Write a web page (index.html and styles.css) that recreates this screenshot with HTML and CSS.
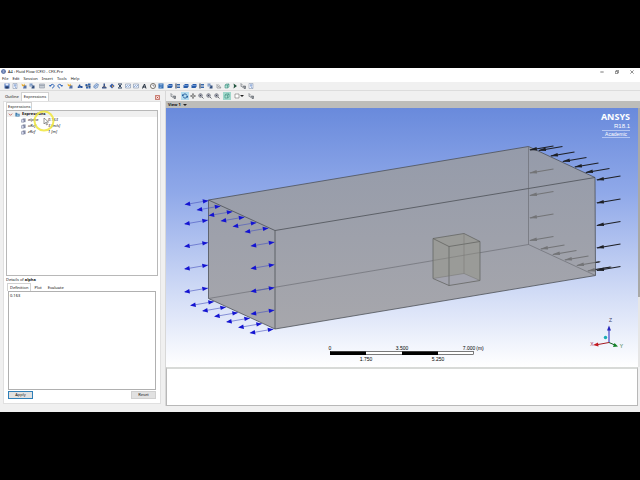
FILE: index.html
```
<!DOCTYPE html>
<html lang="en">
<head>
<meta charset="utf-8">
<title>A4 : Fluid Flow (CFX) - CFX-Pre</title>
<link rel="stylesheet" href="styles.css">
</head>
<body>
<svg class="defs" aria-hidden="true">
  <symbol id="save" viewBox="0 0 12 12"><path d="M1 1h10v10H1z" fill="#4a72b8"/><path d="M3 1h6v4H3z" fill="#e8eefc"/><path d="M3 7h6v4H3z" fill="#26395f"/></symbol>
  <symbol id="doc" viewBox="0 0 12 12"><path d="M2 1h8v10H2z" fill="#f5f8ff" stroke="#7d8ba3"/><path d="M4 4h5M6 3v5l3 2" stroke="#2d63b0" fill="none"/></symbol>
  <symbol id="spark" viewBox="0 0 12 12"><path d="M1 1l4 3 2-3 1 4 3 1-5 1-4-1z" fill="#eeb030"/><path d="M6 5h5v6H4z" fill="#5672a8"/></symbol>
  <symbol id="copy" viewBox="0 0 12 12"><path d="M1 1h6v6H1z" fill="#7897c4"/><path d="M6 5h5v6H5z" fill="#34517f"/><path d="M2 3l5 5" stroke="#eee"/></symbol>
  <symbol id="grid" viewBox="0 0 12 12"><path d="M1 2h10v8H1z" fill="#dde3ea" stroke="#7d8794"/><path d="M1 5h10M4 2v8M8 2v8" stroke="#7d8794"/></symbol>
  <symbol id="undo" viewBox="0 0 12 12"><path d="M3 5c2-4 8-2 7 1 0 3-3 4-4 4" fill="none" stroke="#2b62b8" stroke-width="2"/><path d="M0 4l6 0-4 4z" fill="#2b62b8"/></symbol>
  <symbol id="mesh" viewBox="0 0 12 12"><path d="M1 8l5-6 1 4h4v4H2z" fill="#244f99"/><path d="M3 7l5 3" stroke="#b0c8ee" stroke-width="1"/></symbol>
  <symbol id="domain" viewBox="0 0 12 12"><path d="M1 2h4v4H1zM6 1h5v4H6zM2 7h4v4H2zM7 6h4v5H7z" fill="#3163ac"/><path d="M1 6h10" stroke="#222"/></symbol>
  <symbol id="tilt" viewBox="0 0 12 12"><path d="M3 4l4-3 4 2-2 6-5 2-3-3z" fill="#bdd0ec" stroke="#456da6"/><path d="M2 9l7-6" stroke="#345f9f"/></symbol>
  <symbol id="down" viewBox="0 0 12 12"><path d="M5 1h3v6H5zM2 8h9v3H2z" fill="#38558b"/><path d="M3 6h7L6 10z" fill="#667"/></symbol>
  <symbol id="diamond" viewBox="0 0 12 12"><path d="M6 1l5 5-5 5-5-5z" fill="#365caa"/><path d="M6 4l3 3-3 2z" fill="#e09b35"/></symbol>
  <symbol id="cross" viewBox="0 0 12 12"><path d="M2 2h8M2 10h8M3 3l6 6M9 3l-6 6" stroke="#354865" stroke-width="2"/></symbol>
  <symbol id="chart" viewBox="0 0 12 12"><path d="M1 2h10v8H1z" fill="#edf2fb" stroke="#697c9a"/><path d="M2 8l3-3 2 2 3-3" stroke="#3869b2" fill="none"/></symbol>
  <symbol id="lambda" viewBox="0 0 12 12"><path d="M3 11l4-9 3 9M3 8h6" stroke="#253040" fill="none" stroke-width="2"/></symbol>
  <symbol id="clock" viewBox="0 0 12 12"><circle cx="6" cy="6" r="5" fill="#fff" stroke="#746f67" stroke-width="2"/><path d="M6 3v3h3" stroke="#223" fill="none"/></symbol>
  <symbol id="panel" viewBox="0 0 12 12"><path d="M1 1h10v10H1z" fill="#2b69b1"/><path d="M3 3h6M3 6h6M3 9h4" stroke="#d4e7ff"/></symbol>
  <symbol id="box" viewBox="0 0 12 12"><path d="M1 5l3-3h7v5l-2 3H1z" fill="#295da9"/><path d="M2 5h7l2-2" stroke="#a9caff" fill="none"/></symbol>
  <symbol id="flag" viewBox="0 0 12 12"><path d="M2 1v10" stroke="#222d42" stroke-width="2"/><path d="M4 2h6v3H4zM4 7h6v3H4z" fill="#3868a9"/></symbol>
  <symbol id="angle" viewBox="0 0 12 12"><path d="M2 2v8h8L5 3M3 5l4 4" stroke="#5e6269" fill="none"/></symbol>
  <symbol id="play" viewBox="0 0 12 12"><path d="M3 1l7 5-7 5 1-5z" fill="#245440"/></symbol>
  <symbol id="pointer" viewBox="0 0 12 12"><path d="M2 1v6l2-1 2 4M2 1l4 4" stroke="#4b5058" fill="none"/><path d="M7 6h4v5H8z" fill="#9ba0a7" stroke="#41464d"/></symbol>
  <symbol id="rotate" viewBox="0 0 12 12"><path d="M2 5c0-4 7-4 8 0M10 7c0 4-7 4-8 0" fill="none" stroke="#225a9c" stroke-width="2"/><path d="M0 2v4h4zM12 10V6H8z" fill="#225a9c"/></symbol>
  <symbol id="pan" viewBox="0 0 12 12"><path d="M6 2v8M2 6h8" stroke="#444"/><path d="M6 0l2 3H4zM6 12l2-3H4zM0 6l3-2v4zM12 6L9 4v4z" fill="#444"/></symbol>
  <symbol id="zoom" viewBox="0 0 12 12"><circle cx="5" cy="5" r="3.5" fill="#eef" stroke="#4a4f57" stroke-width="1.4"/><path d="M3 5h4M5 3v4M8 8l3 3" stroke="#353a42" stroke-width="1.4"/></symbol>
  <symbol id="cube" viewBox="0 0 12 12"><path d="M2 4l3-2h5v6l-3 2H2zM2 4h5v6M7 4l3-2" fill="#b0ded2" stroke="#298273"/></symbol>
  <symbol id="square" viewBox="0 0 12 12"><path d="M2 2h8v8H2z" fill="#fff" stroke="#555"/></symbol>
</svg>

<div class="app">
  <header class="titlebar">
    <svg class="logo" viewBox="0 0 12 12" aria-hidden="true"><circle cx="6" cy="6" r="5.5" fill="#415e99"/><path d="M3 3h6v6H3zM3 6h6" fill="#dbe7ff" stroke="#304c89"/></svg>
    <h1>A4 : Fluid Flow (CFX) - CFX-Pre</h1>
    <div class="window-buttons">
      <button aria-label="Minimize"><svg viewBox="0 0 12 12"><path d="M1 6h10" stroke="#333" stroke-width="2"/></svg></button>
      <button aria-label="Restore"><svg viewBox="0 0 12 12"><path d="M1 4h7v7H1zM4 4V1h7v7H8" fill="none" stroke="#333" stroke-width="1.6"/></svg></button>
      <button aria-label="Close"><svg viewBox="0 0 12 12"><path d="M1 1l10 10M11 1L1 11" stroke="#333" stroke-width="1.6"/></svg></button>
    </div>
  </header>
  <nav class="menubar">
    <button>File</button><button>Edit</button><button>Session</button><button>Insert</button><button>Tools</button><button>Help</button>
  </nav>
  <div class="toolbar main-tools" role="toolbar" aria-label="Main">
    <div class="group"><button aria-label="Save"><svg><use href="#save"/></svg></button><button aria-label="Report"><svg><use href="#doc"/></svg></button></div>
    <div class="group"><button aria-label="Import"><svg><use href="#spark"/></svg></button><button aria-label="Copy"><svg><use href="#copy"/></svg></button></div>
    <div class="group spaced"><button aria-label="Table"><svg><use href="#grid"/></svg></button></div>
    <div class="group"><button aria-label="Undo"><svg><use href="#undo"/></svg></button><button aria-label="Redo"><svg class="flip"><use href="#undo"/></svg></button></div>
    <div class="group spaced"><button aria-label="New"><svg><use href="#spark"/></svg></button></div>
    <div class="group"><button aria-label="Mesh"><svg><use href="#mesh"/></svg></button><button aria-label="Domain"><svg><use href="#domain"/></svg></button><button aria-label="Boundary"><svg><use href="#tilt"/></svg></button><button aria-label="Source"><svg><use href="#down"/></svg></button><button aria-label="Point"><svg><use href="#diamond"/></svg></button><button aria-label="Interface"><svg><use href="#cross"/></svg></button><button aria-label="Monitor"><svg><use href="#chart"/></svg></button><button aria-label="Function"><svg><use href="#chart"/></svg></button><button aria-label="Expression"><svg><use href="#lambda"/></svg></button></div>
    <div class="group"><button aria-label="Time"><svg><use href="#clock"/></svg></button><button aria-label="Solver"><svg><use href="#panel"/></svg></button></div>
    <div class="group"><button aria-label="Volume"><svg><use href="#box"/></svg></button><button aria-label="Region"><svg><use href="#flag"/></svg></button><button aria-label="Subdomain"><svg><use href="#box"/></svg></button><button aria-label="Body"><svg><use href="#box"/></svg></button><button aria-label="Output"><svg><use href="#flag"/></svg></button><button aria-label="Coordinates"><svg><use href="#copy"/></svg></button></div>
    <div class="group"><button aria-label="Angle"><svg><use href="#angle"/></svg></button><button aria-label="Transform"><svg><use href="#cube"/></svg></button><button aria-label="Run"><svg><use href="#play"/></svg></button><button aria-label="Write"><svg><use href="#pointer"/></svg></button><button aria-label="Pages"><svg><use href="#doc"/></svg></button></div>
  </div>

  <main class="workspace">
    <section class="side">
      <div class="tabs outer-tabs" role="tablist">
        <button role="tab">Outline</button><button role="tab" class="active" aria-selected="true">Expressions</button>
        <button class="close" aria-label="Close panel"><svg viewBox="0 0 12 12"><path d="M1 1h10v10H1z" fill="#f7dfda" stroke="#b95e52" stroke-width="2"/><path d="M4 4l4 4M8 4l-4 4" stroke="#b84437" stroke-width="2"/></svg></button>
      </div>
      <div class="side-body">
        <div class="tabs inner-tabs" role="tablist"><button role="tab" class="active" aria-selected="true">Expressions</button></div>
        <div class="tree">
          <div class="tree-head"><svg viewBox="0 0 12 12"><path d="M2 4l4 4 4-4" fill="none" stroke="#c0564a" stroke-width="2"/></svg><svg viewBox="0 0 12 12"><path d="M1 2h4l1 2h5v7H1z" fill="#3a78ab"/><path d="M4 6h5v3H4z" fill="#a4d2ea"/></svg><b>Expressions</b></div>
          <ul>
            <li><svg viewBox="0 0 12 12"><path d="M4 1h7v9H4z" fill="#8b91aa"/><path d="M1 4h6v6H1z" fill="#dfe3f5" stroke="#4e5577"/></svg><span>alpha</span><span>0.163</span></li>
            <li><svg viewBox="0 0 12 12"><path d="M4 1h7v9H4z" fill="#8b91aa"/><path d="M1 4h6v6H1z" fill="#dfe3f5" stroke="#4e5577"/></svg><span>uRef</span><span>3 [m/s]</span></li>
            <li><svg viewBox="0 0 12 12"><path d="M4 1h7v9H4z" fill="#8b91aa"/><path d="M1 4h6v6H1z" fill="#dfe3f5" stroke="#4e5577"/></svg><span>zRef</span><span>1 [m]</span></li>
          </ul>
          <div class="cursor"><svg viewBox="0 0 24 24" aria-hidden="true"><circle cx="12" cy="12" r="9.5" fill="none" stroke="#f0e63c" stroke-width="2" opacity=".85"/><path d="M12 9v6l1.500-1.500 1 2.500 1-.5-1-2.500h2z" fill="#fff" stroke="#555" stroke-width=".6"/></svg></div>
        </div>
        <h2>Details of <b>alpha</b></h2>
        <div class="tabs detail-tabs" role="tablist"><button role="tab" class="active" aria-selected="true">Definition</button><button role="tab">Plot</button><button role="tab">Evaluate</button></div>
        <textarea aria-label="Definition" spellcheck="false">0.163</textarea>
        <div class="actions"><button class="apply">Apply</button><button>Reset</button></div>
      </div>
    </section>

    <section class="stage">
      <div class="toolbar view-tools" role="toolbar" aria-label="View">
        <button aria-label="Select"><svg><use href="#pointer"/></svg></button>
        <div class="group"><button aria-label="Rotate" class="on-blue"><svg><use href="#rotate"/></svg></button><button aria-label="Pan"><svg><use href="#pan"/></svg></button><button aria-label="Zoom"><svg><use href="#zoom"/></svg></button><button aria-label="Zoom box"><svg><use href="#zoom"/></svg></button><button aria-label="Fit view"><svg><use href="#zoom"/></svg></button></div>
        <button aria-label="Projection" class="on-green"><svg><use href="#cube"/></svg></button>
        <button aria-label="Layout" class="drop"><svg><use href="#square"/></svg><i class="caret"></i></button>
        <button aria-label="Label"><svg><use href="#pointer"/></svg></button>
      </div>
      <button class="view-title">View 1 <i class="caret"></i></button>
      <div class="view-row">
        <div class="viewport">
          <svg class="scene" viewBox="166 108 472 258" role="img" aria-label="Flow domain with inlet and outlet arrows">
            <defs>
              <linearGradient id="solid" gradientUnits="userSpaceOnUse" x1="0" y1="146" x2="0" y2="329"><stop offset="0" stop-color="#959baa"/><stop offset="1" stop-color="#a7a7ac"/></linearGradient>
              <g id="flow"><path d="M-23 4L0 0" stroke="#4752bd" stroke-width=".6"/><path d="M0 .3l-6-1.600.8 4.400zM-24 4l6 1.500-.8-4.400z" fill="#1414d2"/></g>
              <g id="in"><path d="M1 0L24.500-4" stroke="currentColor" stroke-width="1.200"/><path d="M0 0l7.500-2.900.6 3.400z" fill="currentColor"/></g>
            </defs>
            <path d="M208.500 199.500L528.500 146 595 177 595.500 275 275 328.500 208.500 298z" fill="url(#solid)"/>
            <g fill="none" stroke="#4d5057" stroke-width=".8">
              <path d="M208.500 199.500L528.500 146 595 177 595.500 275 275 328.500 208.500 298zM208.500 199.500L275 230V328.500M275 230L595 177"/>
              <path d="M208.500 298L528.500 244V146M528.500 244l67 31" stroke="#65676d" stroke-width=".6"/>
            </g>
            <path d="M433 238l31-5 16 8v39l-31 5-16-7z" fill="#9a9b98"/><path d="M433 278l31-5 16 7-31 5z" fill="#a2a3ad"/>
            <path d="M433 238l31-5 16 8v39l-31 5-16-7zM433 238l16 8 31-5M449 246v39" fill="none" stroke="#5d5e5c" stroke-width=".7"/>
            <path d="M464 233v40M433 278l31-5 16 7M433 260l47-8" fill="none" stroke="#747573" stroke-width=".5"/>
            <g>
              <use href="#flow" x="208.500" y="200"/><use href="#flow" x="220.500" y="205.500"/><use href="#flow" x="232.500" y="211"/><use href="#flow" x="244.500" y="216.500"/><use href="#flow" x="256.500" y="222"/><use href="#flow" x="268.500" y="227.500"/>
              <use href="#flow" x="208" y="219.500"/><use href="#flow" x="208" y="242"/><use href="#flow" x="208" y="264.500"/><use href="#flow" x="208" y="287.500"/>
              <use href="#flow" x="274.500" y="241.500"/><use href="#flow" x="274.500" y="264"/><use href="#flow" x="274.500" y="287"/><use href="#flow" x="274.500" y="309.500"/>
              <use href="#flow" x="214" y="301"/><use href="#flow" x="226" y="306.500"/><use href="#flow" x="238" y="312"/><use href="#flow" x="250" y="317.500"/><use href="#flow" x="262" y="323"/><use href="#flow" x="273.500" y="328.500"/>
            </g>
            <g color="#737477">
              <use href="#in" x="529" y="172.500"/><use href="#in" x="529" y="195"/><use href="#in" x="529" y="217.500"/><use href="#in" x="529" y="240"/>
              <use href="#in" x="540" y="248.500"/><use href="#in" x="552" y="254"/><use href="#in" x="564" y="259.500"/><use href="#in" x="576" y="265"/><use href="#in" x="587" y="270.500"/>
            </g>
            <g color="#1e2026">
              <use href="#in" x="529" y="149.500"/><use href="#in" x="538" y="150"/><use href="#in" x="550" y="155.500"/><use href="#in" x="562" y="161"/><use href="#in" x="574" y="166.500"/><use href="#in" x="585" y="172"/><use href="#in" x="596" y="179.500"/>
              <use href="#in" x="596" y="202.500"/><use href="#in" x="596" y="225"/><use href="#in" x="596" y="247.500"/><use href="#in" x="596" y="270"/>
              <path d="M595.500 262l4-.7M595.500 269l15-2.500" stroke="currentColor" stroke-width="1.200"/>
            </g>
            <g class="ruler">
              <rect x="330.500" y="351" width="143" height="3" fill="#fff" stroke="#222" stroke-width=".6"/>
              <path d="M330 351h36v3.500h-36zM402 351h36v3.500h-36z"/>
              <text x="330" y="349">0</text><text x="402" y="349">3.500</text><text x="469" y="349">7.000</text><text x="480" y="349">(m)</text>
              <text x="366" y="360">1.750</text><text x="438" y="360">5.250</text>
            </g>
            <g class="axes">
              <path d="M609 342v-13" stroke="#2424bb"/><path d="M609 325l2 5h-4z" fill="#2424bb"/>
              <path d="M609 342l-11 2" stroke="#a51a22"/><path d="M593 344.500l5-2.500.5 4z" fill="#c41820"/>
              <path d="M609 342l7 3" stroke="#126021"/><path d="M618 346l-5 .5 1.500-4z" fill="#118326"/>
              <circle cx="605.500" cy="337" r="1.700" fill="#19adb5"/>
              <text x="610.500" y="321" fill="#446">Z</text><text x="592" y="345" fill="#a35">X</text><text x="621.500" y="347" fill="#286f35">Y</text>
            </g>
          </svg>
          <div class="brand"><strong>ANSYS</strong><span>R18.1</span><em>Academic</em></div>
        </div>
        <div class="edge"></div>
      </div>
      <div class="messages"></div>
    </section>
  </main>
</div>
</body>
</html>
```
FILE: styles.css
```
* { box-sizing: border-box; }
body {
  margin: 0;
  min-height: 100vh;
  display: flex;
  padding: 68px 0;
  background: #000;
  color: #111;
  font: 4px/6px "Noto Sans", "Open Sans", sans-serif;
}
button {
  padding: 0;
  border: 0;
  background: none;
  color: inherit;
  font: inherit;
  display: flex;
  align-items: center;
  justify-content: center;
}
h1, h2, ul { margin: 0; padding: 0; font: inherit; list-style: none; }
.defs { position: absolute; width: 0; height: 0; }
.app { flex: 1; min-width: 0; display: flex; flex-direction: column; background: #f0f0f0; }

.titlebar { height: 7px; display: flex; align-items: center; gap: 2px; padding-left: 1px; background: #fff; }
.logo { width: 5px; height: 5px; }
.window-buttons { margin-left: auto; display: flex; gap: 10px; padding-right: 6px; }
.window-buttons svg { display: block; width: 4px; height: 4px; }
.window-buttons button { width: 5px; height: 6px; }
.menubar { height: 7px; display: flex; gap: 4px; padding-left: 2px; background: #fff; }

.toolbar { display: flex; align-items: center; }
.toolbar button { width: 8px; height: 8px; }
.toolbar svg { width: 6px; height: 6px; }
.main-tools { height: 9px; gap: 1px; padding-left: 3px; border-bottom: 1px solid #dcdcdc; }
.group { display: flex; }
.spaced { margin: 0 1px; }
.flip { transform: scaleX(-1); }

.workspace { flex: 1; min-height: 0; display: grid; grid-template-columns: 162px 1fr; gap: 3px; padding-bottom: 6px; }
.side { display: flex; flex-direction: column; min-height: 0; padding: 1px 1px 2px 3px; }
.tabs { display: flex; }
.tabs button { padding: 0 4px; border: 1px solid transparent; border-bottom: 0; }
.tabs .active { background: #fff; border-color: #d2d2d2; }
.outer-tabs { height: 9px; }
.outer-tabs button { padding: 0 1px; }
.outer-tabs .active { padding: 0 2px; }
.outer-tabs .close { margin-left: auto; padding: 0; }
.close svg { width: 5px; height: 5px; }
.side-body { flex: 1; min-height: 0; display: flex; flex-direction: column; padding: 0 2px 4px; background: #fff; border: 1px solid #e0e0e0; }
.inner-tabs { height: 8px; }
.inner-tabs button { padding: 0 1px; }
.tree { position: relative; flex: 170; min-height: 0; border: 1px solid #b8b8b8; }
.tree-head { height: 6px; display: flex; align-items: center; gap: 2px; padding-left: 1px; background: #f0f0f0; }
.tree svg { width: 5px; height: 5px; }
.tree li { display: grid; grid-template-columns: 5px 18px 1fr; gap: 2px; align-items: center; height: 6px; padding-left: 14px; font-style: italic; }
.tree .cursor { position: absolute; left: 25px; top: -2px; }
.tree .cursor svg { display: block; width: 24px; height: 24px; }
h2 { margin-top: 1px; height: 6px; }
.detail-tabs { height: 8px; padding-left: 1px; }
.detail-tabs button { padding: 0 2px; }
textarea { flex: 98; min-height: 0; margin: 0 2px 1px; padding: 1px; border: 1px solid #b0b0b0; resize: none; font: inherit; color: inherit; outline: 0; }
.actions { display: flex; justify-content: space-between; padding: 0 2px; }
.actions button { width: 25px; height: 8px; background: #e1e1e1; border: 1px solid #d0d0d0; }
.actions .apply { border-color: #2f7fb8; }

.stage { display: flex; flex-direction: column; min-width: 0; min-height: 0; border-left: 1px solid #d8d8d8; }
.view-tools { height: 10px; gap: 2px; padding-left: 3px; }
.view-tools .group { margin-left: 2px; }
.view-tools .on-blue { background: #b3dcef; }
.view-tools .on-green { background: #9fd8cb; }
.view-tools .drop { width: 12px; margin: 0; }
.caret { width: 0; height: 0; border: 2px solid transparent; border-top-color: #222; border-bottom-width: 0; }
.view-title { height: 7px; justify-content: flex-start; gap: 2px; padding-left: 2px; background: #bdbdba; color: #111; font-weight: 700; }
.view-row { flex: 1; min-height: 0; display: flex; }
.viewport { position: relative; flex: 1; min-width: 0; background: linear-gradient(#698adc, #90a9e9 33%, #d7e0f7 75%, #fff); }
.scene { position: absolute; inset: 0; width: 100%; height: 100%; }
.ruler text, .axes text { font: 5px "Liberation Sans", sans-serif; text-anchor: middle; }
.brand { position: absolute; top: 3px; right: 8px; display: flex; flex-direction: column; align-items: flex-end; color: #fff; }
.brand strong { font-size: 9px; line-height: 12px; }
.brand span { font: 6px/7px "Liberation Sans", sans-serif; }
.brand em { padding: 0 3px; border: 1px solid #b3c5f2; border-width: 1px 0; font: 5px/6px "Liberation Sans", sans-serif; }
.edge { width: 2px; background: linear-gradient(#a9a9a6 73%, #e6e6e6 73%); }
.messages { height: 39px; margin-right: 2px; background: #fff; border: 1px solid #b8b8b8; border-top: 2px solid #d8dad8; }
```
